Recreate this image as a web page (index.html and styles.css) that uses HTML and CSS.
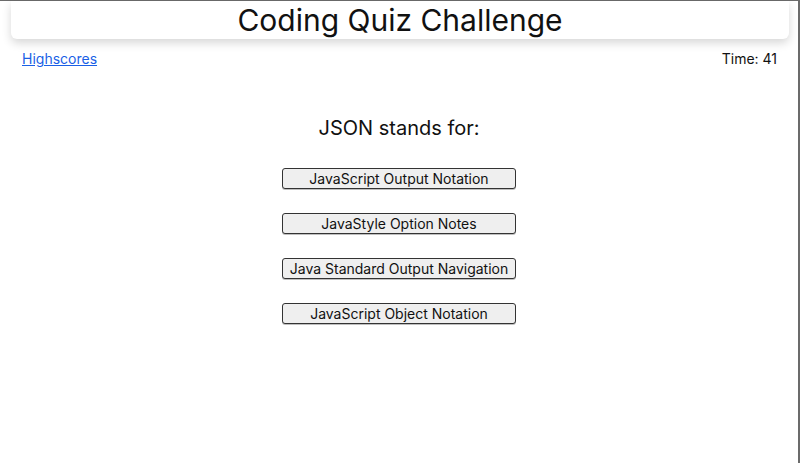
FILE: index.html
```html
<!DOCTYPE html>
<html lang="en">
<head>
<meta charset="utf-8">
<title>Coding Quiz Challenge</title>
<link rel="stylesheet" href="styles.css">
</head>
<body>
<div class="frame">
  <header class="header">
    <h1 class="title">Coding Quiz Challenge</h1>
  </header>
  <nav class="nav">
    <a class="link" href="#">Highscores</a>
    <span class="timer">Time: 41</span>
  </nav>
  <main class="quiz">
    <h2 class="question">JSON stands for:</h2>
    <div class="choices">
      <button class="choice">JavaScript Output Notation</button>
      <button class="choice">JavaStyle Option Notes</button>
      <button class="choice">Java Standard Output Navigation</button>
      <button class="choice">JavaScript Object Notation</button>
    </div>
  </main>
</div>
</body>
</html>
```

FILE: styles.css
```css
html, body {
  margin: 0;
  padding: 0;
  background: #fff;
}
body {
  font-family: Inter, "Noto Sans", sans-serif;
  color: #111;
}
.frame {
  box-sizing: border-box;
  height: 463px;
  border-top: 1px solid #6b6b6b;
  border-right: 2px solid #6b6b6b;
}
.header {
  margin: 0 9px 0 11px;
  height: 38px;
  background: #fff;
  border-radius: 0 0 6px 6px;
  box-shadow: 0 4px 10px rgba(0, 0, 0, 0.16);
  display: flex;
  align-items: center;
  justify-content: center;
}
.title {
  margin: 0;
  font-size: 30px;
  font-weight: 400;
  line-height: 38px;
}
.nav {
  display: flex;
  justify-content: space-between;
  padding: 11px 21px 0 22px;
  font-size: 14px;
  line-height: 17px;
}
.link {
  color: #1a5fe6;
  text-decoration: underline;
}
.quiz {
  display: flex;
  flex-direction: column;
  align-items: center;
  padding-top: 49px;
}
.question {
  margin: 0;
  font-size: 20px;
  font-weight: 400;
  line-height: 24px;
}
.choices {
  display: flex;
  flex-direction: column;
  align-items: center;
  gap: 24px;
  margin-top: 28px;
}
.choice {
  width: 234px;
  height: 21px;
  padding: 0;
  font-family: Inter, "Noto Sans", sans-serif;
  font-size: 14px;
  color: #111;
  background: #efefef;
  border: 1px solid #333;
  border-radius: 3px;
  box-shadow: 0 1px 0 rgba(0,0,0,0.25);
}
```
